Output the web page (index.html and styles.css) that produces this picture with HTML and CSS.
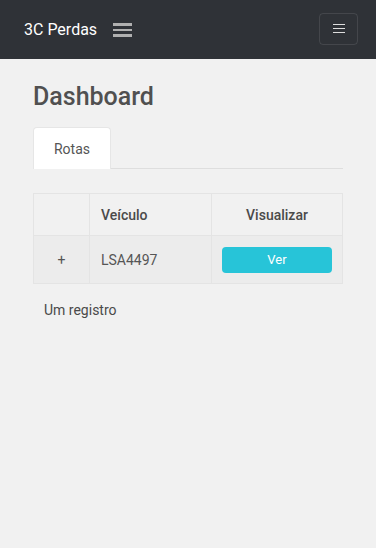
FILE: index.html
```html
<!DOCTYPE html>
<html lang="pt">
<head>
<meta charset="utf-8">
<title>3C Perdas</title>
<link rel="stylesheet" href="styles.css">
</head>
<body>
<header class="navbar">
  <div class="brand-group">
    <span class="brand">3C Perdas</span>
    <span class="sidebar-toggle" aria-label="menu">
      <span></span><span></span><span></span>
    </span>
  </div>
  <button class="navbar-toggler" aria-label="toggle">
    <span class="toggler-icon"><span></span><span></span><span></span></span>
  </button>
</header>
<main class="content">
  <h1 class="title">Dashboard</h1>
  <nav class="tabs">
    <span class="tab active">Rotas</span>
  </nav>
  <table class="grid">
    <thead>
      <tr>
        <th class="c-exp"></th>
        <th class="c-veh">Veículo</th>
        <th class="c-view">Visualizar</th>
      </tr>
    </thead>
    <tbody>
      <tr>
        <td class="c-exp">+</td>
        <td class="c-veh">LSA4497</td>
        <td class="c-view"><button class="btn-ver">Ver</button></td>
      </tr>
    </tbody>
  </table>
  <p class="summary">Um registro</p>
</main>
</body>
</html>
```
FILE: styles.css
```css
* { box-sizing: border-box; }
html, body { margin: 0; padding: 0; }
body {
  background: #f1f1f1;
  font-family: Roboto, "Liberation Sans", sans-serif;
  color: #4a4a4a;
  min-height: 548px;
}
.navbar {
  height: 59px;
  background: #2f3237;
  display: flex;
  align-items: center;
  justify-content: space-between;
  padding: 0 18px 0 24px;
}
.brand-group { display: flex; align-items: center; gap: 16px; }
.brand {
  color: #fff;
  font-size: 16px;
  line-height: 20px;
}
.sidebar-toggle {
  display: flex;
  flex-direction: column;
  gap: 3px;
  width: 19px;
  padding-top: 1px;
}
.sidebar-toggle span {
  display: block;
  height: 2.5px;
  background: #b0b0b0;
}
.navbar-toggler {
  width: 39px;
  height: 32px;
  margin-top: -2px;
  background: transparent;
  border: 1px solid rgba(255,255,255,0.1);
  border-radius: 4px;
  display: flex;
  align-items: center;
  justify-content: center;
  padding: 0;
}
.toggler-icon {
  display: flex;
  flex-direction: column;
  gap: 3px;
  width: 12px;
}
.toggler-icon span { display: block; height: 1px; background: #ddd; }
.content { padding: 0 33px; }
.title {
  margin: 0;
  padding-top: 23px;
  font-size: 25px;
  line-height: 30px;
  font-weight: 500;
  color: #505050;
}
.tabs {
  margin-top: 15px;
  display: flex;
  border-bottom: 1px solid #dedede;
  height: 42px;
}
.tab {
  width: 78px;
  height: 42px;
  background: #fff;
  border: 1px solid #e6e6e6;
  border-bottom: none;
  border-radius: 4px 4px 0 0;
  display: flex;
  align-items: center;
  justify-content: center;
  font-size: 14px;
  color: #555;
}
.grid {
  margin-top: 24px;
  width: 100%;
  border-collapse: collapse;
  font-size: 14px;
}
.grid th, .grid td {
  border: 1px solid #e4e4e4;
  padding: 0 11px;
}
.grid th {
  height: 42px;
  font-weight: 500;
  color: #4a4a4a;
  text-align: left;
}
.grid td { height: 48px; color: #555; }
.grid tbody tr { background: #ececec; }
.c-exp { width: 56px; text-align: center !important; }
.c-veh { width: 122px; }
.grid th.c-view { text-align: center; }
.grid td.c-view { padding: 0 10px; }
.btn-ver {
  display: block;
  width: 100%;
  height: 26px;
  border: none;
  border-radius: 4px;
  background: #27c4d8;
  color: #fff;
  font-family: Roboto, "Liberation Sans", sans-serif;
  font-size: 13px;
  padding: 0;
}
.summary {
  margin: 17px 0 0 11px;
  font-size: 14px;
  line-height: 18px;
  color: #4a4a4a;
}
```
